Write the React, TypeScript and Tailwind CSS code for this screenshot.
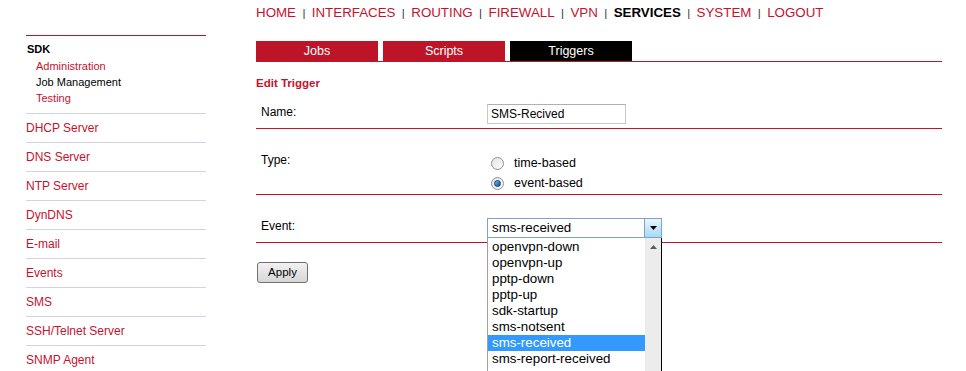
import React from "react";

const RED = "text-[#c4122f]";

function Sidebar() {
  const items = [
    "DHCP Server",
    "DNS Server",
    "NTP Server",
    "DynDNS",
    "E-mail",
    "Events",
    "SMS",
    "SSH/Telnet Server",
    "SNMP Agent",
  ];
  return (
    <div className="ml-[26px] w-[180px] shrink-0 pt-[35px]">
      <div className="border-t border-[#b5172d]" />
      <div className="border-b border-[#d5d3dd] pt-[5px] pb-[7px]">
        <div className="h-[16px] leading-[16px] text-[11px] font-bold text-black pl-[1px] mb-[1px]">SDK</div>
        <div className={`h-[16px] leading-[16px] text-[11px] ${RED} pl-[10px]`}>Administration</div>
        <div className="h-[16px] leading-[16px] text-[11px] text-black pl-[10px]">Job Management</div>
        <div className={`h-[16px] leading-[16px] text-[11px] ${RED} pl-[10px]`}>Testing</div>
      </div>
      {items.map((t) => (
        <div key={t} className={`h-[29px] flex items-center border-b border-[#d5d3dd] text-[12px] ${RED}`}>
          {t}
        </div>
      ))}
    </div>
  );
}

function Nav() {
  const links = ["HOME", "INTERFACES", "ROUTING", "FIREWALL", "VPN", "SERVICES", "SYSTEM", "LOGOUT"];
  return (
    <div className="h-[16px] mt-[5px] leading-[16px] text-[13.33px] whitespace-pre flex">
      {links.map((l, i) => (
        <React.Fragment key={l}>
          {i > 0 && <span className="text-[#333] text-[11.5px]">{"  |  "}</span>}
          <span className={l === "SERVICES" ? "font-bold text-black" : RED}>{l}</span>
        </React.Fragment>
      ))}
    </div>
  );
}

function Tabs() {
  const tabs = ["Jobs", "Scripts", "Triggers"];
  return (
    <div className="mt-[20px] w-[686px] flex gap-[5px] border-b border-[#b5172d]">
      {tabs.map((t) => (
        <div
          key={t}
          className={`w-[122px] h-[20px] flex items-center justify-center text-[12.5px] text-white ${
            t === "Triggers" ? "bg-black" : "bg-[#bd1428]"
          }`}
        >
          {t}
        </div>
      ))}
    </div>
  );
}

function Radio({ checked, label }: { checked?: boolean; label: string }) {
  return (
    <div className="h-[20px] flex items-center">
      <div className="ml-[4px] w-[13px] h-[13px] rounded-full border border-[#8f8f8f] bg-gradient-to-br from-[#e6e6e6] to-[#fafafa] flex items-center justify-center">
        {checked && (
          <div className="w-[7px] h-[7px] rounded-full bg-gradient-to-br from-[#6fc1f0] to-[#0a4f8c] border border-[#0e3d6b]" />
        )}
      </div>
      <span className="ml-[10px] text-[12.5px] text-black">{label}</span>
    </div>
  );
}

function Dropdown() {
  const opts = [
    "openvpn-down",
    "openvpn-up",
    "pptp-down",
    "pptp-up",
    "sdk-startup",
    "sms-notsent",
    "sms-received",
    "sms-report-received",
  ];
  return (
    <div className="absolute left-0 top-[20px] w-[175px] h-[160px] bg-white border-l border-[#a0a0a0] border-r border-r-black flex overflow-hidden z-10">
      <div className="flex-1 pt-[1px]">
        {opts.map((o) => (
          <div
            key={o}
            className={`h-[16px] leading-[16px] pl-[4px] text-[13.33px] ${
              o === "sms-received" ? "bg-[#3399ff] text-white" : "text-black"
            }`}
          >
            {o}
          </div>
        ))}
      </div>
      <div className="w-[16px] bg-[#ececec] flex justify-center pt-[7px]">
        <svg width="7" height="4" viewBox="0 0 7 4">
          <path d="M3.5 0 L7 4 L0 4 Z" fill="#5a5a5a" />
        </svg>
      </div>
    </div>
  );
}

export default function App() {
  return (
    <div className="w-[966px] h-[371px] overflow-hidden bg-white flex font-['Liberation_Sans',Arial,sans-serif]">
      <Sidebar />
      <div className="ml-[50px] w-[686px] shrink-0">
        <Nav />
        <Tabs />
        <div className={`mt-[13px] h-[16px] leading-[16px] text-[11.5px] font-bold ${RED}`}>Edit Trigger</div>

        {/* Name row */}
        <div className="mt-[10px] flex border-b border-[#c4122f] pb-[4px]">
          <div className="w-[231px] shrink-0 pl-[5px] pt-[3px] leading-[16px] text-[12px] text-black">Name:</div>
          <div className="mt-[3px] w-[139px] h-[20px] border border-[#c8c8c8] border-t-[#b0b0b0] flex items-center pl-[3px] text-[12px] text-black">
            SMS-Recived
          </div>
        </div>

        {/* Type row */}
        <div className="flex border-b border-[#c4122f] pt-[23px] pb-[1px]">
          <div className="w-[231px] shrink-0 pl-[5px] h-[16px] leading-[16px] text-[12px] text-black">Type:</div>
          <div className="mt-[1px]">
            <Radio label="time-based" />
            <Radio checked label="event-based" />
          </div>
        </div>

        {/* Event row */}
        <div className="flex border-b border-[#c4122f] pt-[23px] pb-[4px]">
          <div className="w-[231px] shrink-0 pl-[5px] h-[16px] leading-[16px] text-[12px] text-black">Event:</div>
          <div className="relative">
            <div className="w-[175px] h-[20px] border border-[#7da2ce] bg-white flex items-center">
              <span className="flex-1 pl-[4px] text-[13.33px] text-black leading-[16px]">sms-received</span>
              <div className="w-[17px] h-[18px] border-l border-[#7da2ce] bg-gradient-to-b from-[#eaf6fd] to-[#a7d9f5] flex items-center justify-center">
                <svg width="7" height="4" viewBox="0 0 7 4">
                  <path d="M0 0 L7 0 L3.5 4 Z" fill="#000" />
                </svg>
              </div>
            </div>
            <Dropdown />
          </div>
        </div>

        <div className="mt-[19px] ml-[1px] w-[51px] h-[21px] rounded-[3px] border border-[#707070] bg-gradient-to-b from-[#f2f2f2] to-[#d6d6d6] flex items-center justify-center text-[11.5px] text-black">
          Apply
        </div>
      </div>
    </div>
  );
}
